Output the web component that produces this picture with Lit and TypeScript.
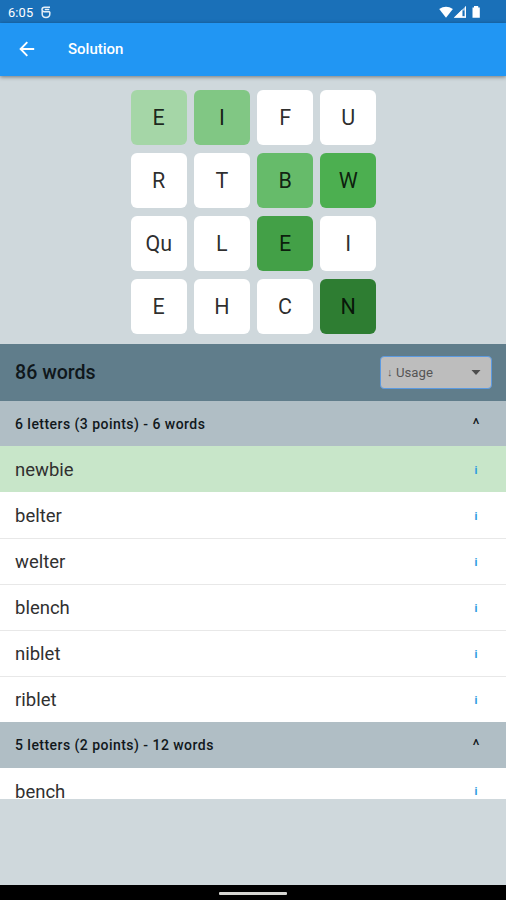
import { LitElement, html, css, svg } from "lit";
import { customElement, property } from "lit/decorators.js";
import { classMap } from "lit/directives/class-map.js";

const WHITE = "#fff";

const TILES: [string, string][] = [
  ["E", "#a5d6a7"], ["I", "#81c784"], ["F", WHITE], ["U", WHITE],
  ["R", WHITE], ["T", WHITE], ["B", "#66bb6a"], ["W", "#4caf50"],
  ["Qu", WHITE], ["L", WHITE], ["E", "#43a047"], ["I", WHITE],
  ["E", WHITE], ["H", WHITE], ["C", WHITE], ["N", "#2e7d32"],
];

const GROUPS = [
  {
    title: "6 letters (3 points) - 6 words",
    words: ["newbie", "belter", "welter", "blench", "niblet", "riblet"],
  },
  { title: "5 letters (2 points) - 12 words", words: ["bench"] },
];

@customElement("status-bar")
class StatusBar extends LitElement {
  static styles = css`
    :host {
      display: flex;
      align-items: center;
      height: 23px;
      flex: none;
      box-sizing: border-box;
      padding: 1px 24px 0 8px;
      background: #1a70b8;
      color: #fff;
      font-size: 12.8px;
    }
    .time { width: 32px; line-height: 23px; height: 23px; letter-spacing: 0.15px; }
    .spacer { flex: 1; }
    svg { display: block; }
  `;
  render() {
    return html`
      <span class="time">6:05</span>
      <svg width="12" height="14" viewBox="0 0 12 14" fill="none" stroke="#e3eef8" stroke-width="1.5">
        <path d="M10 2.2H4.6Q2 2.2 2 4.6Q2 6.8 4.4 6.8H9.9M2.2 4.8V9Q2.2 12.4 6 12.4Q9.8 12.4 9.8 9V6.8M4.8 4.5H9.3" />
      </svg>
      <span class="spacer"></span>
      <svg width="43" height="14" viewBox="0 0 43 14">
        ${svg`
          <path fill="#fff" d="M0.2 4.1Q7 -0.5 13.9 4.1L7 12.7Z" />
          <path fill="#a9cae8" d="M14.8 12.7L27 0.9V12.7Z" />
          <path fill="#fff" d="M14.8 12.7L23.4 4.3V12.7ZM26 1.9L27 0.9V12.7H23V11.5H26Z" />
          <path fill="#1a70b8" d="M23.6 5.5H25.4V11H23.6Z" />
          <path fill="#fff" d="M33.5 2.4H35V0.9H39.2V2.4H40.8V12.7H33.5Z" />
        `}
      </svg>
    `;
  }
}

@customElement("letter-board")
class LetterBoard extends LitElement {
  static styles = css`
    :host {
      display: grid;
      grid-template-columns: repeat(4, 56px);
      grid-auto-rows: 55.4px;
      gap: 7.7px 7.2px;
      justify-content: center;
      height: 268.5px;
      flex: none;
      box-sizing: border-box;
      padding: 14px 0 0 1px;
    }
    .tile {
      display: flex;
      align-items: center;
      justify-content: center;
      border-radius: 6px;
      font-size: 21.5px;
      color: rgba(0, 0, 0, 0.84);
    }
  `;
  render() {
    return TILES.map(
      ([letter, color]) => html`<div class="tile" style="background:${color}">${letter}</div>`
    );
  }
}

@customElement("word-group")
class WordGroup extends LitElement {
  @property() heading = "";
  @property({ attribute: false }) words: string[] = [];
  @property() selected = "";

  static styles = css`
    :host { display: block; }
    .header, .row {
      display: flex;
      align-items: center;
      justify-content: space-between;
      height: 46px;
      box-sizing: border-box;
      padding: 0 26px 0 15px;
    }
    .header {
      height: 45.4px;
      background: #b0bec5;
      font-size: 14px;
      font-weight: 500;
      letter-spacing: 0.46px;
      color: #11181c;
    }
    .row {
      background: #fff;
      border-top: 1px solid #e8e8e8;
      padding-top: 1px;
      font-size: 18.5px;
      color: #303030;
    }
    .header + .row { border-top-color: #fff; }
    .row.selected, .header + .row.selected { background: #c8e6c9; border-top-color: #c8e6c9; }
    .row.selected + .row { border-top-color: #fff; }
    .mark {
      display: flex;
      justify-content: center;
      width: 8px;
      font-size: 17px;
      font-weight: 400;
      letter-spacing: 0;
      line-height: 16px;
    }
    .info {
      display: flex;
      justify-content: center;
      width: 8px;
      font-size: 11px;
      font-weight: 700;
      color: #2d9be0;
    }
  `;
  render() {
    return html`
      <div class="header"><span>${this.heading}</span><span class="mark">^</span></div>
      ${this.words.map(
        (word) => html`
          <div class=${classMap({ row: true, selected: word === this.selected })}>
            <span>${word}</span><span class="info">i</span>
          </div>
        `
      )}
    `;
  }
}

@customElement("app-root")
class AppRoot extends LitElement {
  static styles = css`
    :host {
      display: flex;
      flex-direction: column;
      height: 900px;
      overflow: hidden;
      background: #cfd8dc;
      font-family: Roboto, "Liberation Sans", sans-serif;
    }
    .appbar {
      display: flex;
      align-items: center;
      gap: 33px;
      height: 52.5px;
      flex: none;
      box-sizing: border-box;
      padding-left: 19px;
      background: #2196f3;
      color: #fff;
      font-size: 15px;
      font-weight: 500;
      box-shadow: 0 1px 4px rgba(0, 0, 0, 0.45);
    }
    .appbar svg { display: block; }
    .toolbar {
      display: flex;
      align-items: center;
      justify-content: space-between;
      height: 57px;
      flex: none;
      box-sizing: border-box;
      padding: 0 14px 0 15px;
      background: #607d8b;
      font-size: 19.6px;
      font-weight: 500;
      color: #0f171b;
    }
    .toolbar .count { padding-bottom: 1px; }
    .select {
      display: flex;
      align-items: center;
      width: 112px;
      height: 33px;
      box-sizing: border-box;
      padding: 0 10px 0 6px;
      border: 1px solid #5c9ae0;
      border-radius: 4px;
      background: #bdbdbd;
      color: #555;
      font-size: 13.2px;
      font-weight: 400;
    }
    .arrow { width: 9px; font-size: 11px; }
    .value { flex: 1; }
    .list { height: 398px; flex: none; overflow: hidden; }
    .blank { flex: 1; }
    .navbar {
      display: flex;
      justify-content: center;
      align-items: center;
      height: 15px;
      flex: none;
      box-sizing: border-box;
      padding-top: 2px;
      background: #000;
    }
    .handle { width: 68px; height: 3px; border-radius: 1px; background: #d6d6d2; }
  `;
  render() {
    return html`
      <status-bar></status-bar>
      <div class="appbar">
        <svg width="16" height="16" viewBox="0 0 16 16" fill="none" stroke="#fff" stroke-width="1.9">
          <path d="M15.2 8H2M8.3 1.2L1.6 8L8.3 14.8" />
        </svg>
        <span>Solution</span>
      </div>
      <letter-board></letter-board>
      <div class="toolbar">
        <span class="count">86 words</span>
        <div class="select">
          <span class="arrow">↓</span>
          <span class="value">Usage</span>
          <svg width="10" height="5" viewBox="0 0 10 5"><path fill="#4d4d4d" d="M0.5 0H9.5L5 5Z" /></svg>
        </div>
      </div>
      <div class="list">
        ${GROUPS.map(
          (g) => html`<word-group .heading=${g.title} .words=${g.words} selected="newbie"></word-group>`
        )}
      </div>
      <div class="blank"></div>
      <div class="navbar"><div class="handle"></div></div>
    `;
  }
}
